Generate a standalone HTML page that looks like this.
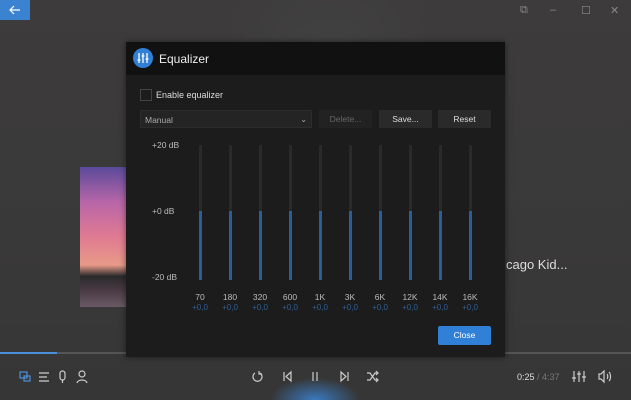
<!DOCTYPE html>
<html><head><meta charset="utf-8"><style>
*{margin:0;padding:0;box-sizing:border-box}
html,body{width:631px;height:400px;overflow:hidden}
body{background:#3b3a3a;font-family:"Liberation Sans",sans-serif;position:relative;color:#ddd}
.abs{position:absolute}
.bg{left:0;top:0;width:631px;height:400px;background:radial-gradient(ellipse 120px 160px at 330px 100px,#444446,transparent),linear-gradient(#3d3b3b,#3a3939 60%,#363636)}
.back{left:0;top:0;width:30px;height:20px;background:#3b82d0}
.wc{top:4px;color:#888;font-size:11px}
.art{left:80px;top:167px;width:46px;height:140px;background:linear-gradient(#5a4a9a,#b866a8 25%,#e07a92 50%,#e89a88 70%,#2a2a2a 78%,#4a3a44 88%,#6a5a66)}
.dlg{left:126px;top:42px;width:379px;height:315px;background:#1c1c1c;box-shadow:0 0 6px rgba(0,0,0,.5)}
.hdr{left:0;top:0;width:379px;height:33px;background:#111}
.ic{left:7px;top:6px;width:20px;height:20px;border-radius:50%;background:#2f80d6}
.ttl{left:33px;top:10px;font-size:12px;color:#eee}
.cb{left:14px;top:47px;width:12px;height:12px;border:1px solid #444;background:#1c1c1c}
.cbl{left:30px;top:48px;font-size:9px;color:#ddd}
.sel{left:14px;top:68px;width:172px;height:18px;background:#242424;border:1px solid #2c2c2c;font-size:8.5px;color:#aaa;padding:4px 4px}
.btn{top:68px;width:53px;height:18px;background:#2a2a2a;font-size:8.5px;text-align:center;line-height:18px;color:#ddd}
.db{font-size:8.5px;color:#bbb}
.tr{width:3px;top:103px;height:135px;background:#2a2a2a}
.tb{width:3px;top:169px;height:69px;background:#2a5e96}
.fl{top:250px;width:30px;text-align:center;font-size:8.5px;color:#bbb}
.fv{top:261px;width:30px;text-align:center;font-size:8px;color:#2e5e90}
.close{left:312px;top:284px;width:53px;height:19px;background:#2f80d6;border-radius:2px;font-size:8.5px;color:#fff;text-align:center;line-height:19px}
.prog{left:0;top:352px;width:631px;height:2px;background:#555}
.prog i{display:block;width:57px;height:2px;background:#4a8fd8}
</style></head><body>
<div class="abs bg"></div>
<div class="abs" style="left:250px;top:370px;width:130px;height:30px;background:radial-gradient(ellipse 45px 22px at 65px 30px,#3a7ac0,transparent)"></div>
<div class="abs back"><svg width="30" height="20" fill="none" stroke="#fff" stroke-width="1.2"><path d="M10 10h10M14 6l-4 4 4 4"/></svg></div>
<div class="abs wc" style="left:520px">⧉</div>
<div class="abs wc" style="left:550px">–</div>
<div class="abs wc" style="left:581px">☐</div>
<div class="abs wc" style="left:610px">✕</div>
<div class="abs art"></div>
<div class="abs" style="left:506px;top:257px;font-size:13px;color:#ddd">cago Kid...</div>
<div class="abs prog"><i></i></div>
<div class="abs dlg">
 <div class="abs hdr"><div class="abs ic"><svg width="20" height="20"><g stroke="#fff" stroke-width="1.3"><path d="M6 5v10M10 5v10M14 5v10"/><path d="M4.5 12h3M8.5 8h3M12.5 11h3"/></g></svg></div><div class="abs ttl">Equalizer</div></div>
 <div class="abs cb"></div><div class="abs cbl">Enable equalizer</div>
 <div class="abs sel">Manual<span style="float:right;font-size:8px">⌄</span></div>
 <div class="abs btn" style="left:193px;color:#666;background:#222">Delete...</div>
 <div class="abs btn" style="left:253px">Save...</div>
 <div class="abs btn" style="left:312px">Reset</div>
 <div class="abs db" style="left:26px;top:98px">+20 dB</div>
 <div class="abs db" style="left:26px;top:164px">+0 dB</div>
 <div class="abs db" style="left:26px;top:230px">-20 dB</div>
 <div class="abs tr" style="left:73px"></div><div class="abs tb" style="left:73px"></div>
 <div class="abs tr" style="left:103px"></div><div class="abs tb" style="left:103px"></div>
 <div class="abs tr" style="left:133px"></div><div class="abs tb" style="left:133px"></div>
 <div class="abs tr" style="left:163px"></div><div class="abs tb" style="left:163px"></div>
 <div class="abs tr" style="left:193px"></div><div class="abs tb" style="left:193px"></div>
 <div class="abs tr" style="left:223px"></div><div class="abs tb" style="left:223px"></div>
 <div class="abs tr" style="left:253px"></div><div class="abs tb" style="left:253px"></div>
 <div class="abs tr" style="left:283px"></div><div class="abs tb" style="left:283px"></div>
 <div class="abs tr" style="left:313px"></div><div class="abs tb" style="left:313px"></div>
 <div class="abs tr" style="left:343px"></div><div class="abs tb" style="left:343px"></div>
 <div class="abs fl" style="left:59px">70</div><div class="abs fv" style="left:59px">+0,0</div>
 <div class="abs fl" style="left:89px">180</div><div class="abs fv" style="left:89px">+0,0</div>
 <div class="abs fl" style="left:119px">320</div><div class="abs fv" style="left:119px">+0,0</div>
 <div class="abs fl" style="left:149px">600</div><div class="abs fv" style="left:149px">+0,0</div>
 <div class="abs fl" style="left:179px">1K</div><div class="abs fv" style="left:179px">+0,0</div>
 <div class="abs fl" style="left:209px">3K</div><div class="abs fv" style="left:209px">+0,0</div>
 <div class="abs fl" style="left:239px">6K</div><div class="abs fv" style="left:239px">+0,0</div>
 <div class="abs fl" style="left:269px">12K</div><div class="abs fv" style="left:269px">+0,0</div>
 <div class="abs fl" style="left:299px">14K</div><div class="abs fv" style="left:299px">+0,0</div>
 <div class="abs fl" style="left:329px">16K</div><div class="abs fv" style="left:329px">+0,0</div>
 <div class="abs close">Close</div>
</div>
<svg class="abs" style="left:0;top:360px" width="631" height="40" fill="none" stroke="#ccc" stroke-width="1.2">
 <rect x="20" y="12" width="7" height="6" stroke="#4a8fd8"/><rect x="24" y="16" width="6" height="5" stroke="#4a8fd8"/>
 <path d="M39 13h10M39 17h8M39 21h10"/>
 <rect x="60" y="11" width="5" height="9" rx="2.5"/><path d="M62.5 20v3"/>
 <circle cx="82" cy="14" r="3"/><path d="M77 23c1-4 9-4 10 0"/>
 <path d="M255 13a4.5 4.5 0 1 0 5 0M259 11v3h3"/>
 <path d="M284 12v9M291 12l-5 4.5 5 4.5z"/>
 <path d="M313 12v9M317 12v9"/>
 <path d="M348 12v9M341 12l5 4.5-5 4.5z"/>
 <path d="M367 13h3l5 7h3M367 20h3l5-7h3M376 11l2 2-2 2M376 18l2 2-2 2"/>
 <path d="M574 11v11M579 11v11M584 11v11M572 18h4M577 14h4M582 17h4"/>
 <path d="M599 14h2l3-3v11l-3-3h-2zM607 14c1 1 1 4 0 5M609 12c2 2 2 7 0 9"/>
</svg>
<div class="abs" style="left:517px;top:372px;font-size:9px;color:#ddd">0:25 <span style="color:#777">/ 4:37</span></div>
</body></html>
